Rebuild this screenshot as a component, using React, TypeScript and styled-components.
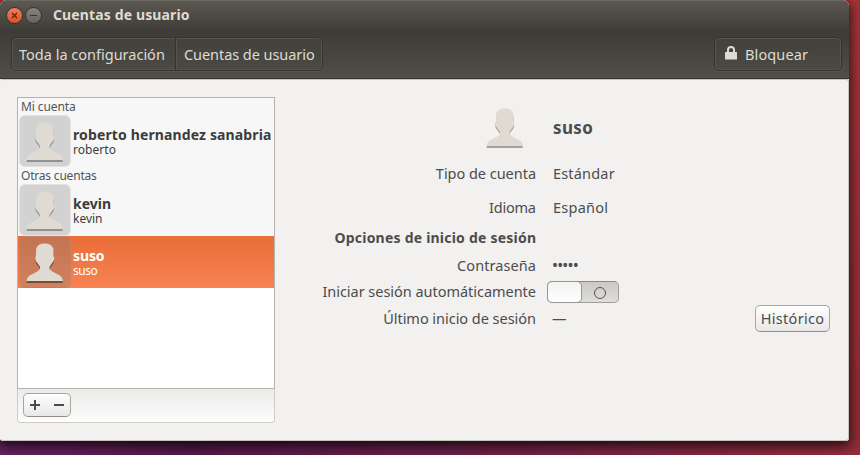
import React from "react";
import styled, { createGlobalStyle, css } from "styled-components";

const GlobalStyle = createGlobalStyle`
  *, *::before, *::after { box-sizing: border-box; }
  body {
    margin: 0;
    overflow: hidden;
    font-family: "Noto Sans", "Open Sans", sans-serif;
    font-size: 14.5px;
    line-height: 20px;
    color: #4c4c4c;
  }
`;

const Desktop = styled.main`
  width: 860px;
  height: 455px;
  overflow: hidden;
  background:
    linear-gradient(90deg, #65215d 0, #541949 190px, #681f48 430px, #932c3a 860px) 0 441px / 860px 14px no-repeat,
    linear-gradient(180deg, #a23338, #8e2b35);
`;

const Window = styled.section`
  display: flex;
  flex-direction: column;
  width: 849px;
  height: 441px;
  border-radius: 6px 6px 3px 3px;
  overflow: hidden;
  background: #f2f1f0;
  box-shadow: 0 4px 12px 1px rgba(0, 0, 0, 0.75);
`;

const TitleBar = styled.header`
  display: flex;
  align-items: center;
  height: 29px;
  padding-left: 6px;
  border-top: 1px solid #6a675f;
  background: linear-gradient(#5b5850, #403f3a);
`;

const WindowButton = styled.button<{ $tone: "close" | "minimize" }>`
  display: grid;
  place-items: center;
  width: 17px;
  height: 17px;
  margin-right: 2px;
  padding: 0;
  border: 1px solid #33322e;
  border-radius: 50%;
  background: ${(p) =>
    p.$tone === "close" ? "linear-gradient(#f37e58, #e2511f)" : "linear-gradient(#85837c, #66645e)"};
`;

const Title = styled.h1`
  margin: 0 0 0 9px;
  font-size: 14px;
  line-height: 20px;
  letter-spacing: 0.13px;
  color: #dfdbd2;
`;

const Toolbar = styled.nav`
  display: flex;
  justify-content: space-between;
  height: 50px;
  padding: 8px 7px 0 11px;
  border-bottom: 1px solid #34332f;
  background: linear-gradient(#3c3b37, #504e46);
`;

const toolbarFrame = css`
  height: 34px;
  border: 1px solid #34332e;
  border-radius: 5px;
  background: linear-gradient(#42413c, #4b4943);
  box-shadow: inset 0 0 0 1px #56544d, 0 1px 0 #57554d;
`;

const Breadcrumb = styled.div`
  ${toolbarFrame}
  display: flex;
  width: 312px;
`;

const Crumb = styled.button<{ $width: number; $spacing: number }>`
  width: ${(p) => p.$width}px;
  padding: 0 0 1px 7px;
  border: 0;
  background: none;
  font: inherit;
  text-align: left;
  white-space: nowrap;
  letter-spacing: ${(p) => p.$spacing}px;
  color: #dfdbd2;
  & + & {
    padding-left: 8px;
    border-left: 1px solid #34332e;
    box-shadow: inset 1px 0 0 #56544d;
  }
`;

const LockButton = styled.button`
  ${toolbarFrame}
  display: flex;
  align-items: center;
  gap: 8px;
  width: 128px;
  padding: 0 0 1px 10px;
  font: inherit;
  letter-spacing: 0.12px;
  color: #dfdbd2;
`;

const LockIcon = styled.svg`
  margin-top: -2px;
`;

const Content = styled.div`
  display: flex;
  flex: 1;
  padding: 17px 18px 17px 16px;
  border: 1px solid #c5c3bf;
  border-radius: 3px;
  border-left-color: #f2f1f0;
  background: #f2f1f0;
  background-clip: padding-box;
`;

const Sidebar = styled.aside`
  display: flex;
  flex-direction: column;
  width: 258px;
  height: 326px;
`;

const AccountList = styled.div`
  height: 292px;
  border: 1px solid #b6b3ae;
  background: #fff;
`;

const GroupTitle = styled.h2<{ $spacing: number }>`
  height: 17px;
  margin: 0;
  padding-left: 3px;
  background: #f7f7f7;
  font-size: 12px;
  font-weight: 400;
  line-height: 17px;
  letter-spacing: ${(p) => p.$spacing}px;
  color: #555;
`;

const Account = styled.div<{ $selected?: boolean }>`
  display: flex;
  align-items: center;
  gap: 2px;
  height: 52px;
  padding-left: 1px;
  color: ${(p) => (p.$selected ? "#fff" : "#3c3c3c")};
  background: ${(p) => (p.$selected ? "linear-gradient(#e96d38, #f78252)" : "#f7f7f7")};
`;

const AvatarTile = styled.div<{ $selected?: boolean }>`
  display: grid;
  place-items: center;
  flex: none;
  width: 52px;
  height: 52px;
  padding-top: 2px;
  border: 1px solid ${(p) => (p.$selected ? "rgba(200,130,95,.6)" : "#e2e2e2")};
  border-radius: 6px;
  background: ${(p) => (p.$selected ? "linear-gradient(#c57450, #cf8160)" : "#d2d2d2")};
`;

const Names = styled.div`
  white-space: nowrap;
  padding-top: 2px;
`;

const FullName = styled.div<{ $spacing: number }>`
  font-size: 14px;
  font-weight: 700;
  line-height: 16px;
  letter-spacing: ${(p) => p.$spacing}px;
`;

const Login = styled.div<{ $spacing: number }>`
  font-size: 12px;
  line-height: 14px;
  letter-spacing: ${(p) => p.$spacing}px;
`;

const ListActions = styled.div`
  flex: 1;
  padding: 4px 5px;
  border: 1px solid #d0cdc9;
  border-top: 0;
  border-radius: 0 0 4px 4px;
  background: linear-gradient(#ecebe9, #fdfdfd);
`;

const raised = css`
  border: 1px solid #a9a6a2;
  border-bottom-color: #918e8a;
  border-radius: 5px;
  background: linear-gradient(#fefefe, #e9e8e7);
`;

const AddRemove = styled.div`
  ${raised}
  display: flex;
  justify-content: space-between;
  width: 48px;
  height: 24px;
  padding: 0 6px;
`;

const IconButton = styled.button`
  display: grid;
  place-items: center;
  width: 10px;
  padding: 0;
  border: 0;
  background: none;
`;

const Details = styled.div`
  display: grid;
  grid-template-columns: 246px 150px 1fr;
  grid-template-rows: 60px 32px 36px 24px 32px 20px 34px;
  align-items: center;
  flex: 1;
  margin-left: 15px;
  padding-top: 1px;
  white-space: nowrap;
`;

const Label = styled.div<{ $spacing: number; $bold?: boolean }>`
  grid-column: 1;
  text-align: right;
  margin-right: ${(p) => -p.$spacing}px;
  padding-bottom: ${(p) => (p.$bold ? 0 : 2)}px;
  letter-spacing: ${(p) => p.$spacing}px;
  ${(p) => p.$bold && "font-weight: 700; font-size: 14px;"}
`;

const Value = styled.div<{ $spacing?: number; $large?: boolean }>`
  grid-column: 2;
  padding: 0 0 ${(p) => (p.$large ? 0 : 2)}px 17px;
  letter-spacing: ${(p) => p.$spacing ?? 0}px;
  ${(p) => p.$large && "font-size: 17px; font-weight: 700;"}
`;

const PasswordDots = styled(Value)`
  font-size: 16px;
  padding-left: 16px;
`;

const EmptyValue = styled(Value)`
  padding-left: 16px;
`;

const Portrait = styled.div`
  display: flex;
  justify-content: flex-end;
  padding-right: 12px;
`;

const Switch = styled.button`
  display: flex;
  grid-column: 2;
  width: 72px;
  height: 22px;
  margin-left: 11px;
  padding: 0;
  border: 1px solid #a09d9a;
  border-top-color: #8b8986;
  border-radius: 5px;
  background: linear-gradient(#cbcac9, #dedddc);
`;

const Knob = styled.span`
  width: 35px;
  height: 22px;
  margin: -1px 0 0 -1px;
  border: 1px solid #999693;
  border-radius: 5px;
  background: linear-gradient(#f3f3f2, #fff);
`;

const SwitchMark = styled.span`
  width: 12px;
  height: 12px;
  margin: 5px 0 0 12px;
  border: 1px solid #555;
  border-radius: 50%;
`;

const HistoryButton = styled.button`
  ${raised}
  grid-column: 3;
  justify-self: end;
  width: 75px;
  height: 27px;
  margin-bottom: 2px;
  padding: 0;
  font: inherit;
  letter-spacing: 0.3px;
  color: #4c4c4c;
`;

const silhouette =
  "M18.7 .5C13 .5 10 3 10 8V13C9 14 9 17 10.5 19C12 20.5 13 22.5 14 24V26C11 30 6 30.5 3 33Q.6 35 .5 38H37Q36.900 35 34.500 33C31.500 30.500 27 30 23.500 26V24C24.500 22.500 25.500 20.500 27 19C28.500 17 28.500 14 27.500 13V8C27.500 3 24.500 .5 18.7 .5Z";

function Person({ shade = "#a3a19f" }: { shade?: string }) {
  return (
    <svg width="38" height="41" viewBox="0 0 38 41">
      <path d={silhouette} fill={shade} transform="translate(0 2)" />
      <path d={silhouette} fill="#dfdbd2" />
    </svg>
  );
}

type AccountRowProps = {
  name: string;
  login: string;
  nameSpacing: number;
  loginSpacing: number;
  selected?: boolean;
};

function AccountRow({ name, login, nameSpacing, loginSpacing, selected }: AccountRowProps) {
  return (
    <Account $selected={selected}>
      <AvatarTile $selected={selected}>
        <Person shade={selected ? "#7c4a36" : "#929292"} />
      </AvatarTile>
      <Names>
        <FullName $spacing={nameSpacing}>{name}</FullName>
        <Login $spacing={loginSpacing}>{login}</Login>
      </Names>
    </Account>
  );
}

export default function App() {
  return (
    <>
      <GlobalStyle />
      <Desktop>
        <Window>
          <TitleBar>
            <WindowButton $tone="close" aria-label="Cerrar">
              <svg width="7" height="7" viewBox="0 0 7 7" stroke="#4a2c20" strokeWidth="1.3">
                <path d="M1 1l5 5M6 1L1 6" />
              </svg>
            </WindowButton>
            <WindowButton $tone="minimize" aria-label="Minimizar">
              <svg width="7" height="3" viewBox="0 0 7 3">
                <path d="M0 1h7v1H0z" fill="#35342f" />
              </svg>
            </WindowButton>
            <Title>Cuentas de usuario</Title>
          </TitleBar>
          <Toolbar>
            <Breadcrumb>
              <Crumb $width={163} $spacing={0}>Toda la configuración</Crumb>
              <Crumb $width={147} $spacing={-0.06}>Cuentas de usuario</Crumb>
            </Breadcrumb>
            <LockButton>
              <LockIcon width="12" height="14" viewBox="0 0 12 14">
                <path d="M3 7V3.800Q3 1 6 1T9 3.800V7" fill="none" stroke="#dfdbd2" strokeWidth="2" />
                <rect y="6" width="12" height="7.500" rx=".5" fill="#dfdbd2" />
              </LockIcon>
              Bloquear
            </LockButton>
          </Toolbar>
          <Content>
            <Sidebar>
              <AccountList>
                <GroupTitle $spacing={-0.1}>Mi cuenta</GroupTitle>
                <AccountRow name="roberto hernandez sanabria" login="roberto" nameSpacing={0.13} loginSpacing={0.05} />
                <GroupTitle $spacing={-0.2}>Otras cuentas</GroupTitle>
                <AccountRow name="kevin" login="kevin" nameSpacing={0.02} loginSpacing={-0.03} />
                <AccountRow name="suso" login="suso" nameSpacing={-0.1} loginSpacing={-0.5} selected />
              </AccountList>
              <ListActions>
                <AddRemove>
                  <IconButton aria-label="Añadir">
                    <svg width="10" height="10" viewBox="0 0 10 10" fill="#4c4c4c">
                      <path d="M4 0h2v4h4v2H6v4H4V6H0V4h4z" />
                    </svg>
                  </IconButton>
                  <IconButton aria-label="Quitar">
                    <svg width="10" height="10" viewBox="0 0 10 10" fill="#4c4c4c">
                      <path d="M0 4h10v2H0z" />
                    </svg>
                  </IconButton>
                </AddRemove>
              </ListActions>
            </Sidebar>
            <Details>
              <Portrait>
                <Person />
              </Portrait>
              <Value $large $spacing={0.36}>suso</Value>
              <Label $spacing={-0.03}>Tipo de cuenta</Label>
              <Value $spacing={0.18}>Estándar</Value>
              <Label $spacing={-0.22}>Idioma</Label>
              <Value $spacing={0.24}>Español</Value>
              <Label $bold $spacing={0.22}>Opciones de inicio de sesión</Label>
              <Label $spacing={0.08}>Contraseña</Label>
              <PasswordDots $spacing={-0.85}>•••••</PasswordDots>
              <Label $spacing={-0.03}>Iniciar sesión automáticamente</Label>
              <Switch role="switch" aria-checked="false" aria-label="Iniciar sesión automáticamente">
                <Knob />
                <SwitchMark />
              </Switch>
              <Label $spacing={-0.03}>Último inicio de sesión</Label>
              <EmptyValue>—</EmptyValue>
              <HistoryButton>Histórico</HistoryButton>
            </Details>
          </Content>
        </Window>
      </Desktop>
    </>
  );
}
